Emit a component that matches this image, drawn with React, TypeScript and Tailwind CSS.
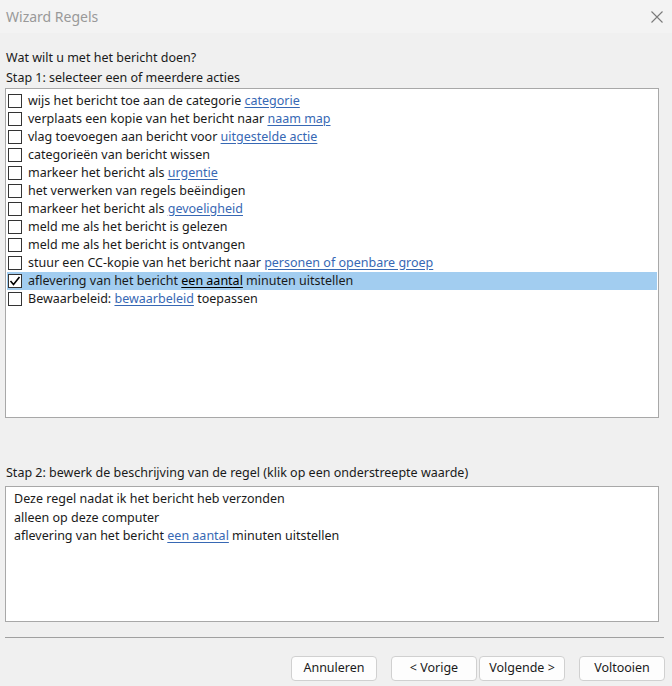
import React from 'react';

type Part = { t: string; link?: boolean };

const rows: { parts: Part[]; checked?: boolean }[] = [
  { parts: [{ t: 'wijs het bericht toe aan de categorie ' }, { t: 'categorie', link: true }] },
  { parts: [{ t: 'verplaats een kopie van het bericht naar ' }, { t: 'naam map', link: true }] },
  { parts: [{ t: 'vlag toevoegen aan bericht voor ' }, { t: 'uitgestelde actie', link: true }] },
  { parts: [{ t: 'categorieën van bericht wissen' }] },
  { parts: [{ t: 'markeer het bericht als ' }, { t: 'urgentie', link: true }] },
  { parts: [{ t: 'het verwerken van regels beëindigen' }] },
  { parts: [{ t: 'markeer het bericht als ' }, { t: 'gevoeligheid', link: true }] },
  { parts: [{ t: 'meld me als het bericht is gelezen' }] },
  { parts: [{ t: 'meld me als het bericht is ontvangen' }] },
  { parts: [{ t: 'stuur een CC-kopie van het bericht naar ' }, { t: 'personen of openbare groep', link: true }] },
  {
    checked: true,
    parts: [
      { t: 'aflevering van het bericht ' },
      { t: 'een aantal', link: true },
      { t: ' minuten uitstellen' },
    ],
  },
  { parts: [{ t: 'Bewaarbeleid: ' }, { t: 'bewaarbeleid', link: true }, { t: ' toepassen' }] },
];

const Text = ({ parts, selected }: { parts: Part[]; selected?: boolean }) => (
  <span className="whitespace-pre">
    {parts.map((p, i) =>
      p.link ? (
        <span
          key={i}
          className={`underline underline-offset-2 ${selected ? 'text-black' : 'text-[#3768b4]'}`}
        >
          {p.t}
        </span>
      ) : (
        <span key={i}>{p.t}</span>
      )
    )}
  </span>
);

const Checkbox = ({ checked }: { checked?: boolean }) => (
  <div className="w-[14px] h-[14px] border border-[#333333] bg-white flex items-center justify-center shrink-0">
    {checked && (
      <svg width="12" height="12" viewBox="0 0 12 12">
        <polyline points="1.5,6 4.5,9.5 10.5,2" fill="none" stroke="#000" strokeWidth="1.6" />
      </svg>
    )}
  </div>
);

const Button = ({ label }: { label: string }) => (
  <button className="w-[86px] h-[25px] rounded-[4px] border border-[#d0d0d0] bg-[#fdfdfd] text-[12.5px] text-[#1a1a1a] flex items-center justify-center">
    {label}
  </button>
);

export default function App() {
  return (
    <div
      className="w-[672px] h-[686px] bg-[#f0f0f0] flex flex-col text-[12.5px] text-[#1a1a1a]"
      style={{ fontFamily: '"Noto Sans", "Open Sans", sans-serif' }}
    >
      {/* title bar */}
      <div className="h-[33px] bg-[#f3f3f3] flex items-center justify-between pl-[6px] pr-[9px]">
        <span className="text-[14px] text-[#999999]">Wizard Regels</span>
        <svg width="12" height="12" viewBox="0 0 12 12">
          <path d="M0.5 0.5 L11.5 11.5 M11.5 0.5 L0.5 11.5" stroke="#7a7a7a" strokeWidth="1.1" />
        </svg>
      </div>

      <div className="flex flex-col px-[5px] pr-[13px]">
        <div className="mt-[15px] h-[20px] leading-[20px] pl-px">Wat wilt u met het bericht doen?</div>
        <div className="h-[20px] leading-[20px] pl-px">Stap 1: selecteer een of meerdere acties</div>

        {/* actions list */}
        <div className="h-[330px] border border-[#a8a8a8] bg-white pt-[3px] px-px">
          {rows.map((r, i) => (
            <div
              key={i}
              className={`h-[18px] flex items-center pl-px gap-[6px] ${r.checked ? 'bg-[#a2cdf0]' : ''}`}
            >
              <Checkbox checked={r.checked} />
              <Text parts={r.parts} selected={r.checked} />
            </div>
          ))}
        </div>

        <div className="mt-[45px] h-[20px] leading-[20px] pl-px">
          Stap 2: bewerk de beschrijving van de regel (klik op een onderstreepte waarde)
        </div>

        {/* description */}
        <div className="mt-[3px] h-[136px] border border-[#a8a8a8] bg-white pt-[3px] pl-[8px] leading-[18.5px]">
          <div>Deze regel nadat ik het bericht heb verzonden</div>
          <div>alleen op deze computer</div>
          <div>
            <Text
              parts={[
                { t: 'aflevering van het bericht ' },
                { t: 'een aantal', link: true },
                { t: ' minuten uitstellen' },
              ]}
            />
          </div>
        </div>
      </div>

      <div className="mt-[15px] ml-[5px] mr-[8px] h-px bg-[#a0a0a0]" />

      <div className="mt-[18px] flex justify-end pr-[7px]">
        <Button label="Annuleren" />
        <div className="ml-[14px]">
          <Button label="< Vorige" />
        </div>
        <div className="ml-[2px]">
          <Button label="Volgende >" />
        </div>
        <div className="ml-[14px]">
          <Button label="Voltooien" />
        </div>
      </div>
    </div>
  );
}
